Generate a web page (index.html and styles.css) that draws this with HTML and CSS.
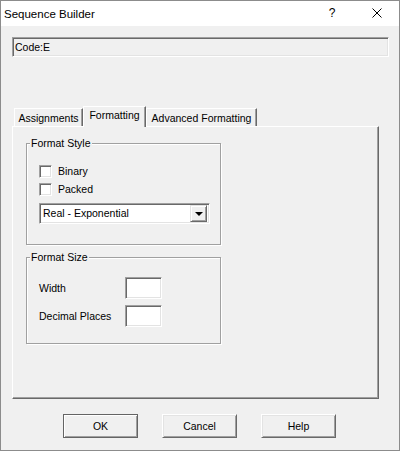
FILE: index.html
```html
<!DOCTYPE html>
<html>
<head>
<meta charset="utf-8">
<title>Sequence Builder</title>
<link rel="stylesheet" href="styles.css">
</head>
<body>
<div class="window">
  <div class="titlebar">
    <span class="title">Sequence Builder</span>
    <div class="caption-btns">
      <span class="cap-btn cap-help">?</span>
      <span class="cap-btn cap-close"><svg width="10" height="10" viewBox="0 0 10 10"><path d="M0.5 0.5 L9.5 9.5 M9.5 0.5 L0.5 9.5" stroke="#000" stroke-width="1" fill="none"/></svg></span>
    </div>
  </div>
  <div class="client">
    <div class="code-field">Code:E</div>
    <div class="tabs">
      <div class="tab tab-assign">Assignments</div>
      <div class="tab tab-format active">Formatting</div>
      <div class="tab tab-adv">Advanced Formatting</div>
    </div>
    <div class="panel">
      <div class="group group-style">
        <div class="group-title">Format Style</div>
        <div class="check check-first"><span class="box"></span><span>Binary</span></div>
        <div class="check check-second"><span class="box"></span><span>Packed</span></div>
        <div class="combo">
          <span class="combo-text">Real - Exponential</span>
          <span class="combo-btn"><span class="arrow"></span></span>
        </div>
      </div>
      <div class="group group-size">
        <div class="group-title">Format Size</div>
        <div class="field-row field-first"><span class="field-label">Width</span><span class="edit"></span></div>
        <div class="field-row field-second"><span class="field-label">Decimal Places</span><span class="edit"></span></div>
      </div>
    </div>
    <div class="buttons">
      <div class="btn btn-default">OK</div>
      <div class="btn">Cancel</div>
      <div class="btn">Help</div>
    </div>
  </div>
</div>
</body>
</html>
```
FILE: styles.css
```css
html, body {
  margin: 0;
  padding: 0;
  background: #f0f0f0;
}

.window {
  width: 400px;
  height: 451px;
  box-sizing: border-box;
  border: 1px solid #8c8c8c;
  background: #f0f0f0;
  font-family: "Liberation Sans", Arial, sans-serif;
  font-size: 10.5px;
  color: #000;
  overflow: hidden;
}

.titlebar {
  height: 25px;
  background: #fff;
  display: flex;
  align-items: center;
  justify-content: space-between;
}

.title {
  font-size: 11.5px;
  padding-left: 3px;
}

.caption-btns {
  display: flex;
  height: 25px;
}

.cap-btn {
  display: flex;
  align-items: center;
  justify-content: center;
  height: 25px;
}

.cap-help {
  width: 46px;
  font-size: 12px;
  padding-bottom: 1px;
  box-sizing: border-box;
}

.cap-close {
  width: 44px;
}

.cap-close svg {
  display: block;
  margin-top: -1px;
}

.client {
  display: flex;
  flex-direction: column;
}

.code-field {
  margin: 11px 0 0 11px;
  width: 377px;
  height: 20px;
  box-sizing: border-box;
  border: 1px solid;
  border-color: #a0a0a0 #fff #fff #a0a0a0;
  box-shadow: inset 1px 1px 0 #696969, inset -1px -1px 0 #e3e3e3;
  padding-left: 2px;
  line-height: 18px;
  background: #f0f0f0;
}

.tabs {
  display: flex;
  align-items: flex-end;
  height: 20px;
  margin: 49px 0 0 13px;
}

.tab {
  box-sizing: border-box;
  height: 18px;
  border-top: 1px solid #fff;
  border-left: 1px solid #fff;
  border-right: 1px solid #696969;
  box-shadow: inset -1px 0 0 #a0a0a0;
  display: flex;
  align-items: center;
  justify-content: center;
  line-height: 13px;
  padding-top: 1px;
  background: #f0f0f0;
}

.tab-assign { width: 69px; }
.tab-format { width: 63px; }
.tab-adv { width: 111px; }

.tab.active {
  height: 21px;
  margin-bottom: -1px;
  position: relative;
  z-index: 1;
  padding-top: 0;
  padding-bottom: 3px;
}

.panel {
  margin-left: 11px;
  width: 367px;
  height: 273px;
  box-sizing: border-box;
  border: 1px solid;
  border-color: #fff #696969 #696969 #fff;
  box-shadow: inset -1px -1px 0 #a0a0a0;
  padding: 16px 0 0 13px;
}

.group {
  width: 195px;
  box-sizing: border-box;
  border: 1px solid #a0a0a0;
  box-shadow: inset 1px 1px 0 #fff, 1px 1px 0 #fff;
  padding: 0 0 20px 12px;
}

.group-size {
  margin-top: 12px;
  padding-bottom: 16px;
}

.group-title {
  width: fit-content;
  margin: -7px 0 0 -9px;
  padding: 0 1px;
  background: #f0f0f0;
  line-height: 13px;
  height: 13px;
}

.check {
  display: flex;
  align-items: center;
  height: 13px;
  line-height: 13px;
}

.check-first { margin-top: 15px; }
.check-second { margin-top: 5px; }

.box {
  width: 13px;
  height: 13px;
  box-sizing: border-box;
  border: 1px solid;
  border-color: #a0a0a0 #fff #fff #a0a0a0;
  box-shadow: inset 1px 1px 0 #696969, inset -1px -1px 0 #e3e3e3;
  background: #fff;
  margin-right: 6px;
  flex: none;
}

.combo {
  margin-top: 7px;
  width: 171px;
  height: 21px;
  box-sizing: border-box;
  border: 1px solid;
  border-color: #a0a0a0 #fff #fff #a0a0a0;
  box-shadow: inset 1px 1px 0 #696969, inset -1px -1px 0 #e3e3e3;
  background: #fff;
  display: flex;
  align-items: center;
  justify-content: space-between;
  padding: 2px 2px 2px 3px;
}

.combo-text {
  line-height: 13px;
}

.combo-btn {
  width: 17px;
  height: 17px;
  box-sizing: border-box;
  background: #f0f0f0;
  border: 1px solid;
  border-color: #e3e3e3 #696969 #696969 #e3e3e3;
  box-shadow: inset 1px 1px 0 #fff, inset -1px -1px 0 #a0a0a0;
  display: flex;
  align-items: center;
  justify-content: center;
}

.arrow {
  width: 0;
  height: 0;
  border-left: 4px solid transparent;
  border-right: 4px solid transparent;
  border-top: 4px solid #000;
  margin-top: 1px;
}

.field-row {
  display: flex;
  align-items: center;
  height: 22px;
}

.field-first { margin-top: 13px; }
.field-second { margin-top: 6px; }

.field-label {
  width: 86px;
  line-height: 13px;
}

.edit {
  width: 37px;
  height: 22px;
  box-sizing: border-box;
  border: 1px solid;
  border-color: #a0a0a0 #fff #fff #a0a0a0;
  box-shadow: inset 1px 1px 0 #696969, inset -1px -1px 0 #e3e3e3;
  background: #fff;
}

.buttons {
  display: flex;
  justify-content: center;
  gap: 24px;
  margin-top: 15px;
  padding-right: 1px;
}

.btn {
  width: 75px;
  height: 24px;
  box-sizing: border-box;
  border: 1px solid;
  border-color: #fff #696969 #696969 #fff;
  box-shadow: inset 1px 1px 0 #e3e3e3, inset -1px -1px 0 #a0a0a0;
  display: flex;
  align-items: center;
  justify-content: center;
  line-height: 13px;
  background: #f0f0f0;
}

.btn-default {
  border-color: #646464;
  box-shadow: inset 1px 1px 0 #fff, inset -1px -1px 0 #a0a0a0;
}
```
